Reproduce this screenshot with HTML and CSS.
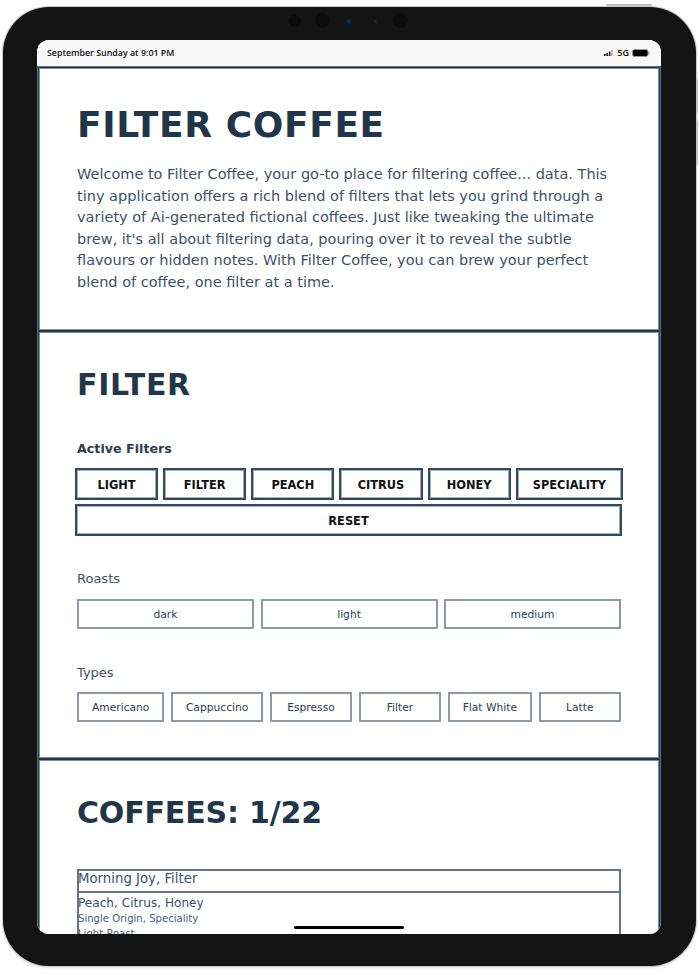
FILE: index.html
```html
<!DOCTYPE html>
<html lang="en">
<head>
<meta charset="utf-8">
<title>Filter Coffee</title>
<link rel="stylesheet" href="styles.css">
</head>
<body>
<div class="device">
  <span class="side-btn side-top"></span>
  <span class="side-btn side-right-a"></span>
  <span class="side-btn side-right-b"></span>
  <div class="sensors">
    <span class="lens lens-a"></span>
    <span class="lens lens-b"></span>
    <span class="lens-dot lens-blue"></span>
    <span class="lens-dot lens-tiny"></span>
    <span class="lens lens-c"></span>
  </div>
  <div class="screen">
    <div class="statusbar">
      <span class="status-time">September Sunday at 9:01 PM</span>
      <span class="status-right">
        <svg class="signal" width="10" height="6" viewBox="0 0 10 6"><rect x="0" y="4" width="1.6" height="2" fill="#111"/><rect x="2.4" y="3" width="1.6" height="3" fill="#111"/><rect x="4.8" y="1.5" width="1.6" height="4.5" fill="#111"/><rect x="7.2" y="0" width="1.6" height="6" fill="#aaa"/></svg>
        <span class="status-5g">5G</span>
        <svg class="battery" width="18" height="8" viewBox="0 0 18 8"><rect x="0.5" y="0.5" width="15.5" height="7" rx="2" fill="#000" stroke="#999"/><rect x="16.5" y="2.5" width="1.2" height="3" rx="0.6" fill="#999"/></svg>
      </span>
    </div>
    <div class="page">
      <section class="panel panel-intro">
        <h1 class="title">FILTER COFFEE</h1>
        <p class="intro">Welcome to Filter Coffee, your go-to place for filtering coffee... data. This tiny application offers a rich blend of filters that lets you grind through a variety of Ai-generated fictional coffees. Just like tweaking the ultimate brew, it's all about filtering data, pouring over it to reveal the subtle flavours or hidden notes. With Filter Coffee, you can brew your perfect blend of coffee, one filter at a time.</p>
      </section>
      <section class="panel panel-filter">
        <h2 class="heading heading-filter">FILTER</h2>
        <h3 class="active-label">Active Filters</h3>
        <div class="active-list">
          <button class="chip-active">LIGHT</button>
          <button class="chip-active">FILTER</button>
          <button class="chip-active">PEACH</button>
          <button class="chip-active">CITRUS</button>
          <button class="chip-active">HONEY</button>
          <button class="chip-active">SPECIALITY</button>
        </div>
        <button class="chip-active chip-reset">RESET</button>
        <h4 class="group-label group-roasts">Roasts</h4>
        <div class="option-row option-row-roasts">
          <button class="option">dark</button>
          <button class="option">light</button>
          <button class="option">medium</button>
        </div>
        <h4 class="group-label group-types">Types</h4>
        <div class="option-row option-row-types">
          <button class="option">Americano</button>
          <button class="option">Cappuccino</button>
          <button class="option">Espresso</button>
          <button class="option">Filter</button>
          <button class="option">Flat White</button>
          <button class="option">Latte</button>
        </div>
      </section>
      <section class="panel panel-coffees">
        <h2 class="heading heading-coffees">COFFEES: 1/22</h2>
        <article class="coffee">
          <div class="coffee-name">Morning Joy, Filter</div>
          <div class="coffee-body">
            <div class="coffee-notes">Peach, Citrus, Honey</div>
            <div class="coffee-meta">Single Origin, Speciality</div>
            <div class="coffee-meta">Light Roast</div>
          </div>
        </article>
      </section>
    </div>
    <span class="home-bar"></span>
  </div>
</div>
</body>
</html>
```
FILE: styles.css
```css
* { box-sizing: border-box; }
html, body { margin: 0; padding: 0; background: #fff; }
body { width: 699px; height: 974px; overflow: hidden; font-family: "DejaVu Sans", Verdana, sans-serif; color: #2c3e50; }

.device {
  position: relative;
  width: 693px;
  height: 959px;
  margin: 7px 0 0 3px;
  padding: 33px 35px 32px 34px;
  background: #141414;
  border-radius: 46px;
  box-shadow: 0 0 0 1px #c9c9c9, 0 2px 3px rgba(0,0,0,.12);
}
.side-btn { position: absolute; background: #c4c4c4; }
.side-top { top: -3px; right: 44px; width: 46px; height: 2px; }
.side-right-a { top: 72px; right: -2px; width: 2px; height: 34px; }
.side-right-b { top: 114px; right: -2px; width: 2px; height: 44px; }

.sensors { position: absolute; top: 0; left: 0; width: 100%; height: 33px; }
.lens { position: absolute; border-radius: 50%; background: #0c0c0c; }
.lens-a { left: 286px; top: 8px; width: 12px; height: 12px; }
.lens-b { left: 312px; top: 6px; width: 15px; height: 15px; }
.lens-c { left: 390px; top: 6px; width: 15px; height: 15px; }
.lens-dot { position: absolute; border-radius: 50%; }
.lens-blue { left: 343px; top: 12px; width: 5px; height: 5px; background: #13294d; }
.lens-tiny { left: 371px; top: 13px; width: 3px; height: 3px; background: #222; }

.screen {
  position: relative;
  height: 100%;
  background: #fff;
  border-radius: 12px;
  overflow: hidden;
}
.statusbar {
  height: 26px;
  padding: 0 11px 0 10px;
  background: #f8f8f8;
  display: flex;
  align-items: center;
  justify-content: space-between;
}
.status-time { font: 600 8.85px/12px "Open Sans", sans-serif; color: #111; }
.status-right { display: flex; align-items: center; gap: 3px; }
.status-5g { font: 600 9px/12px "Open Sans", sans-serif; color: #111; }
.signal, .battery { display: block; }

.page { padding: 1px 1px 0; background: #5f7386; }
.panel {
  border: 1px solid #22364b;
  background: #fff;
  padding: 0 38px;
  box-shadow: inset 0 0 0 1px #7d8fa0;
}
.panel-intro { height: 264px; padding-top: 35px; }
.panel-filter { height: 428px; padding-top: 34px; }
.panel-coffees { height: 400px; padding-top: 34px; }

.title { margin: 0; font-size: 36px; line-height: 44px; font-weight: 700; color: #22364b; letter-spacing: .62px; }
.intro { margin: 17px 0 0; font-size: 14.5px; line-height: 21.6px; color: #3d5166; }
.heading { margin: 0; font-size: 30px; line-height: 38px; font-weight: 700; color: #22364b; }
.heading-filter { letter-spacing: .66px; }
.heading-coffees { letter-spacing: -.16px; margin-bottom: 37px; }

.active-label { margin: 35px 0 0; font-size: 12.7px; line-height: 20px; font-weight: 700; color: #2c3e50; }
.active-list { display: flex; gap: 5px; margin: 9px -2px 0; }
.chip-active {
  flex: 1 1 0;
  height: 32px;
  padding: 1px 15px 0;
  border: 2px solid #34495e;
  background: #fff;
  box-shadow: inset 0 0 0 1px #9fb0c0;
  font: 700 11.4px "DejaVu Sans", sans-serif;
  color: #111;
  white-space: nowrap;
}
.chip-reset { display: block; width: 547px; margin: 4px -2px 0; }

.group-label { margin: 0; font-size: 13px; line-height: 20px; font-weight: 400; color: #3d5166; }
.group-roasts { margin-top: 33px; }
.group-types { margin-top: 34px; }
.option-row { display: flex; gap: 6.5px; }
.option-row-roasts { margin-top: 10px; }
.option-row-types { margin-top: 9px; }
.option {
  flex: 1 1 0;
  height: 30px;
  padding: 0 13px;
  border: 2px solid #8d99a6;
  background: #fff;
  font: 400 10.7px "DejaVu Sans", sans-serif;
  color: #2c3e50;
  white-space: nowrap;
}

.coffee { border: 2px solid #64748b; }
.coffee-name { height: 22px; margin-left: -1px; font-size: 13.3px; line-height: 15px; color: #3d5166; border-bottom: 2px solid #64748b; }
.coffee-body { padding: 2px 0; margin-left: -1px; }
.coffee-notes { font-size: 12.1px; line-height: 16px; color: #3d5166; }
.coffee-meta { font-size: 10.1px; line-height: 15px; color: #4a5c70; }

.home-bar {
  position: absolute;
  left: 257px;
  bottom: 5px;
  width: 110px;
  height: 3px;
  border-radius: 2px;
  background: #000;
}
```
